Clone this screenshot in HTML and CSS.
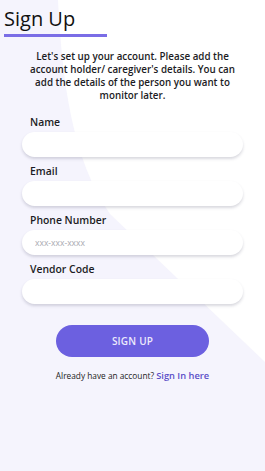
FILE: index.html
```html
<!DOCTYPE html>
<html>
  <head>
    <meta charset="utf-8">
    <meta name="viewport" content="width=device-width">
    <title>Sign Up</title>
    <link rel="stylesheet" href="styles.css">
  </head>
  <body>
    <!-- decorative white shape behind the form -->
    <svg class="backdrop" width="265" height="471" viewBox="0 0 265 471">
      <path d="M58 0 C62 80 72 160 110 214 L265 362 L265 0 Z" fill="#ffffff"/>
    </svg>

    <div class="page">
      <div class="header">
        <h1 class="title">Sign Up</h1>
        <div class="title-bar"></div>
      </div>

      <p class="intro">Let's set up your account. Please add the account holder/ caregiver's details. You can add the details of the person you want to monitor later.</p>

      <form class="signup">
        <div class="field">
          <label for="name">Name</label>
          <input id="name" type="text">
        </div>
        <div class="field">
          <label for="email">Email</label>
          <input id="email" type="email">
        </div>
        <div class="field">
          <label for="phone">Phone Number</label>
          <input id="phone" type="tel" placeholder="xxx-xxx-xxxx">
        </div>
        <div class="field">
          <label for="vendor">Vendor Code</label>
          <input id="vendor" type="text">
        </div>
        <div class="actions">
          <button type="button" class="submit">SIGN UP</button>
        </div>
      </form>

      <p class="signin">Already have an account? <a href="#">Sign In here</a></p>
    </div>
  </body>
</html>
```

FILE: styles.css
```css
html, body {
  margin: 0;
  height: 100%;
}
body {
  font-family: "Open Sans", sans-serif;
  background: #f5f4fd;
  color: #1c1c24;
  width: 265px;
  position: relative;
  overflow: hidden;
}
.backdrop {
  position: absolute;
  top: 0;
  left: 0;
  z-index: 0;
}
.page {
  position: relative;
  z-index: 1;
}
.header {
  padding: 5px 0 0 4px;
}
.title {
  margin: 0;
  font-size: 20px;
  font-weight: 400;
  line-height: 27px;
  color: #111;
}
.title-bar {
  width: 103px;
  height: 3px;
  margin-top: 2px;
  background: #7a6de6;
}
.intro {
  margin: 13px 0 0;
  padding: 0 27px;
  text-align: center;
  font-size: 9.8px;
  font-weight: 600;
  line-height: 13px;
}
.signup {
  padding: 0 22px;
  margin-top: 13px;
}
.field {
  display: flex;
  flex-direction: column;
  margin-bottom: 7px;
}
.field label {
  margin-left: 8px;
  font-size: 10.4px;
  font-weight: 600;
  line-height: 15px;
  margin-bottom: 2px;
}
.field input {
  box-sizing: border-box;
  height: 25px;
  width: 221px;
  border: none;
  border-radius: 13px;
  background: #fff;
  box-shadow: 0 2px 3px rgba(80, 80, 110, 0.22);
  padding: 0 13px;
  font-family: "Open Sans", sans-serif;
  font-size: 8.5px;
  outline: none;
}
.field input::placeholder {
  color: #a9a9b0;
}
.actions {
  display: flex;
  justify-content: center;
  padding-top: 14px;
}
.submit {
  width: 153px;
  height: 32px;
  border: none;
  border-radius: 16px;
  background: #6c60e0;
  color: #eceafc;
  font-family: "Open Sans", sans-serif;
  font-size: 10px;
  font-weight: 600;
  letter-spacing: 0.2px;
}
.signin {
  margin: 12px 0 0;
  text-align: center;
  font-size: 8.3px;
  color: #222;
}
.signin a {
  color: #5b4fc8;
  font-size: 9.3px;
  font-weight: 600;
  text-decoration: none;
}
```
